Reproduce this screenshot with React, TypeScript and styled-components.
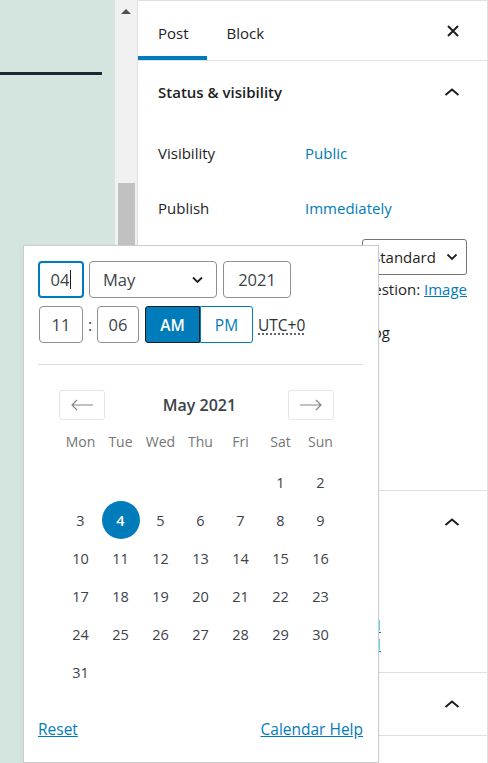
import React from "react";
import styled, { createGlobalStyle } from "styled-components";

const GlobalStyle = createGlobalStyle`
  body {
    margin: 0;
    font-family: "Open Sans", "Noto Sans", sans-serif;
    color: #1e1e1e;
  }
  * { box-sizing: border-box; }
`;

const BLUE = "#007cba";

const Page = styled.div`
  position: relative;
  display: flex;
  width: 488px;
  height: 763px;
  overflow: hidden;
  background: #fff;
`;

const Canvas = styled.div`
  width: 115px;
  background: #d4e5df;
  padding-top: 72px;
`;

const Rule = styled.div`
  width: 102px;
  height: 3px;
  background: #1e2633;
`;

const Scrollbar = styled.div`
  width: 22px;
  background: #f1f1f1;
  display: flex;
  flex-direction: column;
  align-items: center;
`;

const ScrollArrow = styled.div`
  margin-top: 9px;
  width: 0;
  height: 0;
  border-left: 5px solid transparent;
  border-right: 5px solid transparent;
  border-bottom: 5px solid #505050;
`;

const Thumb = styled.div`
  margin-top: 169px;
  width: 17px;
  flex: 1;
  background: #c1c1c1;
`;

const Sidebar = styled.div`
  flex: 1;
  display: flex;
  flex-direction: column;
  border-top: 1px solid #e0e0e0;
  border-left: 1px solid #e0e0e0;
  border-right: 1px solid #e0e0e0;
  font-size: 15px;
`;

const Header = styled.div`
  display: flex;
  align-items: stretch;
  height: 60px;
  border-bottom: 1px solid #e0e0e0;
`;

const Tab = styled.div<{ $active?: boolean }>`
  display: flex;
  align-items: center;
  padding: 4px 18px 0 20px;
  font-size: 15px;
  font-weight: 500;
  box-shadow: ${(p) => (p.$active ? `inset 0 -4px 0 ${BLUE}` : "none")};
`;

const IconButton = styled.div`
  margin-left: auto;
  margin-right: 22px;
  width: 24px;
  display: flex;
  align-items: center;
  justify-content: center;
`;

const Panel = styled.div`
  border-bottom: 1px solid #e0e0e0;
`;

const PanelTitle = styled.div`
  display: flex;
  align-items: center;
  height: 62px;
  padding-left: 20px;
  font-weight: 600;
`;

const Chevron = styled.svg`
  margin-left: auto;
  margin-right: 27px;
`;

const PanelBody = styled.div<{ $h: number }>`
  height: ${(p) => p.$h}px;
  padding: 2px 20px 0;
  overflow: hidden;
`;

const Row = styled.div`
  display: grid;
  grid-template-columns: 147px 1fr;
  align-items: center;
  height: 55px;
`;

const ValueLink = styled.span`
  color: ${BLUE};
`;

const FormatRow = styled.div`
  display: flex;
  justify-content: space-between;
  align-items: center;
  margin-top: 4px;
`;

const FakeSelect = styled.div`
  display: flex;
  align-items: center;
  justify-content: space-between;
  width: 105px;
  height: 36px;
  padding: 0 8px 0 9px;
  border: 1px solid #757575;
  border-radius: 3px;
`;

const Suggestion = styled.div`
  text-align: right;
  margin-top: 4px;
  a {
    color: ${BLUE};
    text-decoration: underline;
  }
`;

const Checkline = styled.div`
  margin-top: 23px;
  padding-right: 77px;
  text-align: right;
`;

const UrlLine = styled.div`
  width: 223px;
  height: 19px;
  overflow: hidden;
  white-space: nowrap;
  color: ${BLUE};
  text-decoration: underline;
`;

const Spacer = styled.div<{ $h: number }>`
  height: ${(p) => p.$h}px;
`;

const Popover = styled.div`
  position: absolute;
  left: 23px;
  top: 245px;
  width: 356px;
  height: 518px;
  background: #fff;
  border: 1px solid #ccc;
  padding: 15px 15px 0 14px;
  box-shadow: 0 2px 6px rgba(0, 0, 0, 0.05);
`;

const FieldRow = styled.div<{ $top?: number }>`
  display: flex;
  align-items: center;
  margin-top: ${(p) => p.$top ?? 0}px;
`;

const Field = styled.div<{ $w: number; $focus?: boolean; $ml?: number }>`
  display: flex;
  align-items: center;
  justify-content: center;
  width: ${(p) => p.$w}px;
  height: 37px;
  margin-left: ${(p) => p.$ml ?? 0}px;
  border: ${(p) => (p.$focus ? `2px solid ${BLUE}` : "1px solid #8c8f94")};
  border-radius: 4px;
  font-size: 16.5px;
  color: #3c434a;
`;

const Caret = styled.span`
  display: inline-block;
  width: 1px;
  height: 19px;
  margin-left: 1px;
  background: #1e1e1e;
`;

const MonthSelect = styled(Field)`
  justify-content: space-between;
  padding: 0 12px 0 13px;
`;

const Colon = styled.span`
  width: 14px;
  text-align: center;
  font-size: 16px;
  color: #3c434a;
`;

const Meridiem = styled.div<{ $on?: boolean; $ml?: number }>`
  display: flex;
  align-items: center;
  justify-content: center;
  width: ${(p) => (p.$on ? 55 : 53)}px;
  height: 37px;
  margin-left: ${(p) => p.$ml ?? 0}px;
  font-size: 15.5px;
  font-weight: ${(p) => (p.$on ? 600 : 400)};
  background: ${(p) => (p.$on ? BLUE : "#fff")};
  color: ${(p) => (p.$on ? "#fff" : BLUE)};
  border: 1px solid ${(p) => (p.$on ? "#1e1e1e" : BLUE)};
  border-radius: ${(p) => (p.$on ? "3px 0 0 3px" : "0 3px 3px 0")};
`;

const Zone = styled.span`
  margin-left: 5px;
  font-size: 15.5px;
  color: #2c3338;
  text-decoration: underline dotted;
  text-underline-offset: 3px;
`;

const Divider = styled.div`
  height: 1px;
  margin-top: 21px;
  background: #ddd;
`;

const Nav = styled.div`
  display: flex;
  align-items: center;
  justify-content: space-between;
  margin: 25px 29px 0 21px;
`;

const NavButton = styled.div`
  width: 46px;
  height: 30px;
  border: 1px solid #e4e7e7;
  border-radius: 3px;
  display: flex;
  align-items: center;
  justify-content: center;
`;

const Caption = styled.div`
  font-size: 16px;
  font-weight: 600;
  color: #3c434a;
  margin-left: 6px;
`;

const Grid = styled.div`
  display: grid;
  grid-template-columns: repeat(7, 40px);
  width: 280px;
  margin: 0 auto;
`;

const WeekHead = styled(Grid)`
  margin-top: 9px;
  height: 24px;
  align-items: center;
`;

const WeekDay = styled.div`
  text-align: center;
  font-size: 14px;
  color: #757575;
`;

const Days = styled(Grid)`
  margin-top: 10px;
  grid-auto-rows: 38px;
`;

const Day = styled.div<{ $sel?: boolean }>`
  display: flex;
  align-items: center;
  justify-content: center;
  font-size: 14.5px;
  color: ${(p) => (p.$sel ? "#fff" : "#3c434a")};
  span {
    display: flex;
    align-items: center;
    justify-content: center;
    width: 38px;
    height: 38px;
    border-radius: 50%;
    background: ${(p) => (p.$sel ? BLUE : "transparent")};
    font-weight: ${(p) => (p.$sel ? 600 : 400)};
  }
`;

const Footer = styled.div`
  display: flex;
  justify-content: space-between;
  margin-top: 27px;
  font-size: 15.5px;
  a {
    color: ${BLUE};
    text-decoration: underline;
  }
`;

const ChevronUp = () => (
  <Chevron width="16" height="10" viewBox="0 0 16 10">
    <path d="M1.5 8L8 2.5 14.5 8" fill="none" stroke="#1e1e1e" strokeWidth="2" />
  </Chevron>
);

const SmallDown = ({ w = 12 }: { w?: number }) => (
  <svg width={w} height="8" viewBox="0 0 12 8">
    <path d="M1.5 1.5L6 6 10.5 1.5" fill="none" stroke="#1e1e1e" strokeWidth="1.8" />
  </svg>
);

const Arrow = ({ dir }: { dir: "left" | "right" }) => (
  <svg width="24" height="12" viewBox="0 0 24 12">
    {dir === "left" ? (
      <path d="M23 6H2M7 1L2 6l5 5" fill="none" stroke="#82888a" strokeWidth="1.2" />
    ) : (
      <path d="M1 6h21M17 1l5 5-5 5" fill="none" stroke="#82888a" strokeWidth="1.2" />
    )}
  </svg>
);

const weekdays = ["Mon", "Tue", "Wed", "Thu", "Fri", "Sat", "Sun"];
const cells: (number | null)[] = [
  ...Array(5).fill(null),
  ...Array.from({ length: 31 }, (_, i) => i + 1),
];

export default function App() {
  return (
    <>
      <GlobalStyle />
      <Page>
        <Canvas>
          <Rule />
        </Canvas>
        <Scrollbar>
          <ScrollArrow />
          <Thumb />
        </Scrollbar>
        <Sidebar>
          <Header>
            <Tab $active>Post</Tab>
            <Tab>Block</Tab>
            <IconButton>
              <svg width="12" height="12" viewBox="0 0 12 12">
                <path d="M1 1l10 10M11 1L1 11" stroke="#1e1e1e" strokeWidth="2" />
              </svg>
            </IconButton>
          </Header>
          <Panel>
            <PanelTitle>
              Status &amp; visibility
              <ChevronUp />
            </PanelTitle>
            <PanelBody $h={367}>
              <Row>
                <span>Visibility</span>
                <ValueLink>Public</ValueLink>
              </Row>
              <Row>
                <span>Publish</span>
                <ValueLink>Immediately</ValueLink>
              </Row>
              <FormatRow>
                <span>Post Format</span>
                <FakeSelect>
                  Standard
                  <SmallDown />
                </FakeSelect>
              </FormatRow>
              <Suggestion>
                Suggestion: <a>Image</a>
              </Suggestion>
              <Checkline>Stick to the top of the blog</Checkline>
            </PanelBody>
          </Panel>
          <Panel>
            <PanelTitle>
              Permalink
              <ChevronUp />
            </PanelTitle>
            <PanelBody $h={119}>
              <Spacer $h={60} />
              <UrlLine>http://localhost/2021/05/04/hello-world/</UrlLine>
              <UrlLine>http://localhost/2021/05/04/hello-world/</UrlLine>
            </PanelBody>
          </Panel>
          <Panel>
            <PanelTitle>
              Categories
              <ChevronUp />
            </PanelTitle>
          </Panel>
        </Sidebar>

        <Popover>
          <FieldRow>
            <Field $w={46} $focus>
              04
              <Caret />
            </Field>
            <MonthSelect $w={128} $ml={5}>
              May
              <SmallDown w={13} />
            </MonthSelect>
            <Field $w={68} $ml={6}>
              2021
            </Field>
          </FieldRow>
          <FieldRow $top={8}>
            <Field $w={44} $ml={1}>
              11
            </Field>
            <Colon>:</Colon>
            <Field $w={42}>06</Field>
            <Meridiem $on $ml={6}>
              AM
            </Meridiem>
            <Meridiem>PM</Meridiem>
            <Zone>UTC+0</Zone>
          </FieldRow>
          <Divider />
          <Nav>
            <NavButton>
              <Arrow dir="left" />
            </NavButton>
            <Caption>May 2021</Caption>
            <NavButton>
              <Arrow dir="right" />
            </NavButton>
          </Nav>
          <WeekHead>
            {weekdays.map((d) => (
              <WeekDay key={d}>{d}</WeekDay>
            ))}
          </WeekHead>
          <Days>
            {cells.map((d, i) => (
              <Day key={i} $sel={d === 4}>
                {d && <span>{d}</span>}
              </Day>
            ))}
          </Days>
          <Footer>
            <a>Reset</a>
            <a>Calendar Help</a>
          </Footer>
        </Popover>
      </Page>
    </>
  );
}
